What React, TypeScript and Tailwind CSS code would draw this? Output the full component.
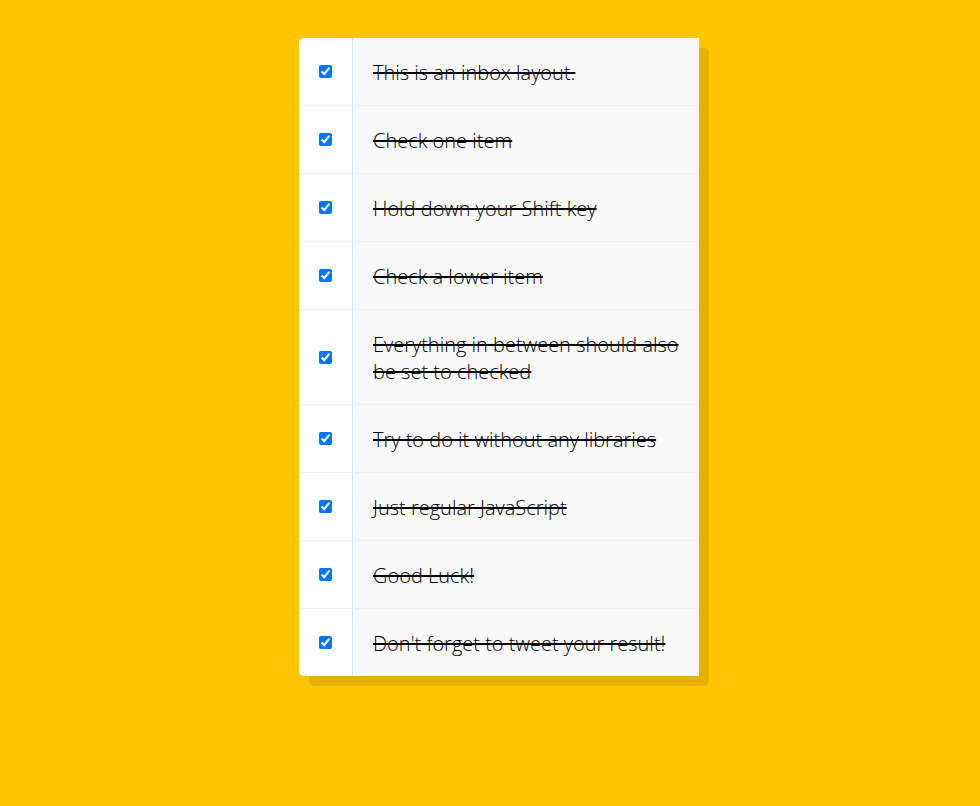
const items = [
  'This is an inbox layout.',
  'Check one item',
  'Hold down your Shift key',
  'Check a lower item',
  'Everything in between should also be set to checked',
  'Try to do it without any libraries',
  'Just regular JavaScript',
  'Good Luck!',
  "Don't forget to tweet your result!",
];

export default function App() {
  return (
    <main className="min-h-screen bg-[#ffc600] pt-[38px] pb-12 pl-[18px] font-['Open_Sans','Noto_Sans',sans-serif]">
      <div className="mx-auto w-full max-w-[400px] rounded-[5px] bg-white shadow-[10px_10px_0_rgba(0,0,0,0.1)]">
        {items.map((text, i) => (
          <div key={text} className="flex items-center border-b border-b-[#f1f1f1] last:border-b-0">
            <input id={`item-${i}`} type="checkbox" defaultChecked className="m-5 size-[13px] shrink-0" />
            <label
              htmlFor={`item-${i}`}
              className="flex-1 border-l border-l-[#d1e2ff] bg-[#f9f9f9] px-5 pt-[21px] pb-[19px] text-xl leading-[27px] font-light text-black line-through decoration-2"
            >
              {text}
            </label>
          </div>
        ))}
      </div>
    </main>
  );
}
